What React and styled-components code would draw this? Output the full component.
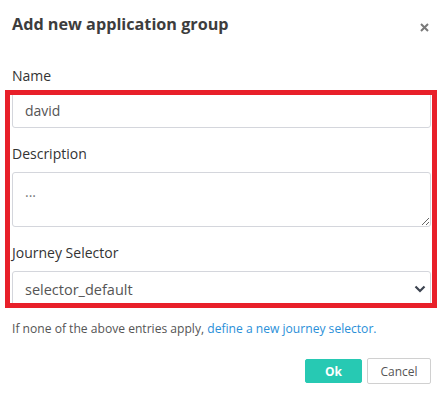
import React from "react";
import styled, { createGlobalStyle } from "styled-components";

const GlobalStyle = createGlobalStyle`
  html, body {
    margin: 0;
    padding: 0;
    background: #fff;
  }
  body {
    font-family: "Open Sans", "Liberation Sans", sans-serif;
    color: #333;
  }
`;

const Dialog = styled.div`
  width: 444px;
  height: 398px;
  box-sizing: border-box;
  padding: 0 13px 0 12px;
  display: flex;
  flex-direction: column;
`;

const Header = styled.div`
  display: flex;
  align-items: center;
  justify-content: space-between;
  height: 44px;
  padding-top: 2px;
  margin-bottom: 20px;
`;

const Title = styled.h4`
  margin: 0;
  font-size: 16.2px;
  font-weight: 700;
  color: #3d3d3d;
`;

const CloseButton = styled.button`
  border: 0;
  background: none;
  padding: 0;
  margin-right: 1px;
  margin-top: 6px;
  width: 12px;
  height: 12px;
  display: flex;
  align-items: center;
  justify-content: center;
  cursor: pointer;
`;

const Highlight = styled.div`
  position: relative;
  &::after {
    content: "";
    position: absolute;
    left: -7px;
    right: -6px;
    top: -2px;
    bottom: -1px;
    border: 5px solid #e8202a;
    pointer-events: none;
  }
`;

const Field = styled.div`
  display: flex;
  flex-direction: column;
  margin-bottom: ${(p) => p.$gap ?? 16}px;
`;

const Label = styled.label`
  font-size: 14px;
  line-height: 20px;
  color: #333;
  margin-bottom: 8px;
`;

const TopLabel = styled(Label)`
  margin-bottom: 6px;
`;

const inputBase = `
  box-sizing: border-box;
  width: 100%;
  border: 1px solid #d4d6dc;
  border-radius: 3px;
  font-family: "Open Sans", "Liberation Sans", sans-serif;
  font-size: 14px;
  color: #555;
  background: #fff;
  outline: none;
`;

const TextInput = styled.input`
  ${inputBase}
  height: 36px;
  padding: 0 12px;
`;

const TextArea = styled.textarea`
  ${inputBase}
  height: 55px;
  padding: 9px 12px;
  line-height: 20px;
  resize: vertical;
  &::placeholder {
    color: #777;
  }
`;

const SelectWrap = styled.div`
  position: relative;
`;

const Select = styled.select`
  ${inputBase}
  appearance: none;
  -webkit-appearance: none;
  height: 36px;
  padding: 0 30px 0 12px;
  font-size: 14.5px;
`;

const Chevron = styled.svg`
  position: absolute;
  right: 5px;
  top: 14px;
  pointer-events: none;
`;

const HelpText = styled.p`
  margin: 13px 0 0;
  font-size: 12.1px;
  line-height: 18px;
  color: #555;
`;

const Link = styled.a`
  color: #2a8fd8;
  text-decoration: none;
`;

const Footer = styled.div`
  display: flex;
  justify-content: flex-end;
  align-items: center;
  gap: 5px;
  margin-top: 20px;
`;

const Button = styled.button`
  box-sizing: border-box;
  height: ${(p) => (p.$primary ? 24 : 26)}px;
  padding: 0 12px;
  border-radius: 2px;
  font-family: "Open Sans", "Liberation Sans", sans-serif;
  font-size: 12px;
  font-weight: ${(p) => (p.$primary ? 700 : 400)};
  min-width: ${(p) => (p.$primary ? 57 : 64)}px;
  color: ${(p) => (p.$primary ? "#fff" : "#555")};
  background: ${(p) => (p.$primary ? "#27c9b3" : "#fff")};
  border: 1px solid ${(p) => (p.$primary ? "#27c9b3" : "#d0d0d0")};
  cursor: pointer;
`;

function App() {
  return (
    <>
      <GlobalStyle />
      <Dialog>
        <Header>
          <Title>Add new application group</Title>
          <CloseButton aria-label="Close">
            <svg width="9" height="9" viewBox="0 0 9 9">
              <path d="M1 1 L8 8 M8 1 L1 8" stroke="#7a7a7a" strokeWidth="2" />
            </svg>
          </CloseButton>
        </Header>

        <TopLabel htmlFor="name">Name</TopLabel>
        <Highlight>
          <Field>
            <TextInput id="name" defaultValue="david" />
          </Field>
          <Field>
            <Label htmlFor="desc">Description</Label>
            <TextArea id="desc" placeholder="..." />
          </Field>
          <Field $gap={0}>
            <Label htmlFor="selector">Journey Selector</Label>
            <SelectWrap>
              <Select id="selector" defaultValue="selector_default">
                <option value="selector_default">selector_default</option>
              </Select>
              <Chevron width="12" height="8" viewBox="0 0 12 8">
                <path d="M1.5 1.5 L6 6 L10.5 1.5" fill="none" stroke="#3d4450" strokeWidth="2.2" />
              </Chevron>
            </SelectWrap>
          </Field>
        </Highlight>

        <HelpText>
          If none of the above entries apply,{" "}
          <Link href="#">define a new journey selector.</Link>
        </HelpText>

        <Footer>
          <Button $primary>Ok</Button>
          <Button>Cancel</Button>
        </Footer>
      </Dialog>
    </>
  );
}

export default App;
